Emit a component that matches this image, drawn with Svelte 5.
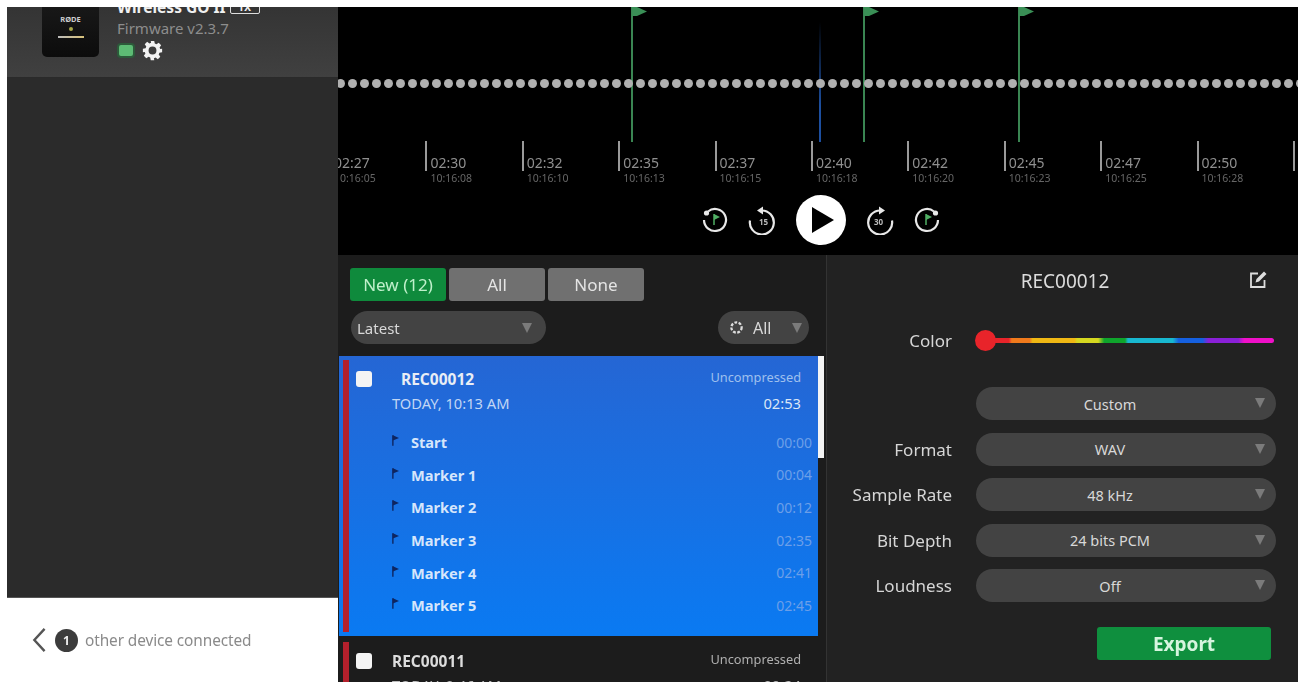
<script>
  const dots = Array.from({ length: 81 });
  const ticks = [
    ['02:27', '10:16:05'], ['02:30', '10:16:08'], ['02:32', '10:16:10'], ['02:35', '10:16:13'],
    ['02:37', '10:16:15'], ['02:40', '10:16:18'], ['02:42', '10:16:20'], ['02:45', '10:16:23'],
    ['02:47', '10:16:25'], ['02:50', '10:16:28'], ['', '']
  ];
  const flags = [293, 525, 680];
  const markers = [
    ['Start', '00:00'], ['Marker 1', '00:04'], ['Marker 2', '00:12'],
    ['Marker 3', '02:35'], ['Marker 4', '02:41'], ['Marker 5', '02:45']
  ];
  const selects = [
    ['', 'Custom'], ['Format', 'WAV'], ['Sample Rate', '48 kHz'], ['Bit Depth', '24 bits PCM'], ['Loudness', 'Off']
  ];
</script>

<div class="page">
  <aside class="side">
    <div class="device">
      <div class="thumb">
        <span class="brand">RØDE</span>
        <span class="led"></span>
        <span class="strip"></span>
      </div>
      <div class="info">
        <div class="name">Wireless GO II <span class="tx">TX</span></div>
        <div class="fw">Firmware v2.3.7</div>
        <div class="status">
          <span class="batt"></span>
          <svg class="gear" viewBox="0 0 24 24" width="21" height="21">
            <path fill="#f2f2f2" fill-rule="evenodd" d="M10 1h4l.6 3.1 1.9.8 2.6-1.8 2.8 2.8-1.8 2.6.8 1.9L23 10v4l-3.1.6-.8 1.9 1.8 2.6-2.8 2.8-2.6-1.8-1.9.8L14 23h-4l-.6-3.1-1.9-.8-2.6 1.8-2.8-2.8 1.8-2.6-.8-1.9L1 14v-4l3.1-.6.8-1.9-1.8-2.6 2.8-2.8 2.6 1.8 1.9-.8zM12 7.5a4.5 4.5 0 1 0 0 9 4.5 4.5 0 0 0 0-9z"/>
          </svg>
        </div>
      </div>
    </div>
    <div class="side-fill"></div>
    <div class="side-foot">
      <svg viewBox="0 0 16 28" width="16" height="26">
        <path d="M14 2 3 14l11 12" fill="none" stroke="#555" stroke-width="2.6"/>
      </svg>
      <span class="count">1</span>
      <span class="other">other device connected</span>
    </div>
  </aside>

  <main class="main">
    <section class="timeline">
      {#each flags as left}
        <div class="flag" style="left:{left}px">
          <svg viewBox="0 0 15 9" width="15" height="9"><path d="M0 0h5l10 4.5-10 4.5H0z" fill="#3a8f56"/></svg>
        </div>
      {/each}
      <div class="playhead"></div>
      <div class="dots">
        {#each dots as _}<span class="dot"></span>{/each}
      </div>
      <div class="ruler">
        {#each ticks as t}
          <div class="tick">
            <div class="tt">{t[0]}</div>
            <div class="ts">{t[1]}</div>
          </div>
        {/each}
      </div>
      <div class="controls">
        <svg viewBox="0 0 30 30" width="30" height="30">
          <path d="M8 6.5a11 11 0 1 1-4 8.5" fill="none" stroke="#e8e8e8" stroke-width="2.2"/>
          <circle cx="6.5" cy="8" r="2.6" fill="#e8e8e8"/>
          <path d="M14 9v11" stroke="#4fae63" stroke-width="1.5"/><path d="M14 9l6 3-6 3z" fill="#4fae63"/>
        </svg>
        <svg viewBox="0 0 30 30" width="30" height="30">
          <path d="M14 5.5a12 12 0 1 1-12 10" fill="none" stroke="#e8e8e8" stroke-width="2.2"/>
          <path d="M15 1.5v8l-6-4z" fill="#e8e8e8"/>
          <text x="15.5" y="20" class="skip">15</text>
        </svg>
        <div class="play">
          <svg viewBox="0 0 24 28" width="24" height="28"><path d="M1 1l22 13L1 27z" fill="#000"/></svg>
        </div>
        <svg viewBox="0 0 30 30" width="30" height="30">
          <path d="M16 5.5a12 12 0 1 0 12 10" fill="none" stroke="#e8e8e8" stroke-width="2.2"/>
          <path d="M15 1.5v8l6-4z" fill="#e8e8e8"/>
          <text x="14.5" y="20" class="skip">30</text>
        </svg>
        <svg viewBox="0 0 30 30" width="30" height="30">
          <path d="M22 6.5a11 11 0 1 0 4 8.5" fill="none" stroke="#e8e8e8" stroke-width="2.2"/>
          <circle cx="23.5" cy="8" r="2.6" fill="#e8e8e8"/>
          <path d="M14 9v11" stroke="#4fae63" stroke-width="1.5"/><path d="M14 9l6 3-6 3z" fill="#4fae63"/>
        </svg>
      </div>
    </section>

    <section class="lower">
      <div class="listpane">
        <div class="tabs">
          <button class="tab active">New (12)</button>
          <button class="tab">All</button>
          <button class="tab">None</button>
        </div>
        <div class="filters">
          <div class="pill latest"><span>Latest</span><i class="caret"></i></div>
          <div class="pill colour">
            <svg viewBox="0 0 16 16" width="15" height="15">
              <circle cx="8" cy="8" r="5.5" fill="none" stroke="#ddd" stroke-width="2.4" stroke-dasharray="3 1.6"/>
            </svg>
            <span>All</span><i class="caret"></i>
          </div>
        </div>
        <div class="listwrap">
          <div class="scrollthumb"></div>
          <article class="rec selected">
            <div class="bar"></div>
            <div class="rec-head">
              <span class="check"></span>
              <div class="rec-text">
                <div class="rowline">
                  <span class="rec-name offset">REC00012</span>
                  <span class="kind">Uncompressed</span>
                </div>
                <div class="rowline second">
                  <span class="date">TODAY, 10:13 AM</span>
                  <span class="dur">02:53</span>
                </div>
              </div>
            </div>
            <div class="markers">
              {#each markers as m}
                <div class="marker">
                  <svg viewBox="0 0 8 12" width="7" height="11"><path d="M1 0v12" stroke="#0e2560" stroke-width="1.6"/><path d="M1 0l7 3-7 3z" fill="#0e2560"/></svg>
                  <span class="mname">{m[0]}</span>
                  <span class="mtime">{m[1]}</span>
                </div>
              {/each}
            </div>
          </article>
          <article class="rec plain">
            <div class="bar"></div>
            <div class="rec-head">
              <span class="check"></span>
              <div class="rec-text">
                <div class="rowline">
                  <span class="rec-name">REC00011</span>
                  <span class="kind">Uncompressed</span>
                </div>
                <div class="rowline second">
                  <span class="date">TODAY, 9:46 AM</span>
                  <span class="dur">00:24</span>
                </div>
              </div>
            </div>
          </article>
        </div>
      </div>

      <div class="detail">
        <header class="dhead">
          <span class="dtitle">REC00012</span>
          <svg class="edit" viewBox="0 0 20 20" width="20" height="20">
            <path d="M10 3.5H3v13.5h13.5V10" fill="none" stroke="#ddd" stroke-width="1.8"/>
            <path d="M7.5 12.5l1-3.5L16 1.5 18.5 4 11 11.5z" fill="#ddd"/>
          </svg>
        </header>
        <div class="colorrow">
          <span class="lbl">Color</span>
          <div class="slider"><span class="knob"></span></div>
        </div>
        <div class="form">
          {#each selects as s}
            <div class="frow">
              <span class="lbl">{s[0]}</span>
              <div class="sel"><span>{s[1]}</span><i class="caret"></i></div>
            </div>
          {/each}
        </div>
        <div class="exportrow"><button class="export">Export</button></div>
      </div>
    </section>
  </main>
</div>

<style>
  :global(body) { margin: 0; background: #fff; }
  .page {
    display: flex;
    height: 682px;
    box-sizing: border-box;
    padding: 7px 5px 0 7px;
    overflow: hidden;
    font-family: "Noto Sans", "Open Sans", sans-serif;
    filter: blur(0.6px);
  }
  .side { width: 331px; flex: none; display: flex; flex-direction: column; }
  .device {
    height: 71px;
    flex: none;
    display: flex;
    gap: 18px;
    padding-left: 35px;
    overflow: hidden;
    background: linear-gradient(#343434, #404040);
    border-bottom: 1px solid #2a2a2a;
    box-sizing: border-box;
  }
  .thumb {
    width: 57px;
    height: 60px;
    margin-top: -10px;
    flex: none;
    border-radius: 5px;
    background: linear-gradient(#1a1a1a, #0c0c0c);
    display: flex;
    flex-direction: column;
    align-items: center;
    padding-top: 18px;
    box-sizing: border-box;
    color: #ccc;
  }
  .brand { font-size: 7.5px; font-weight: 700; line-height: 9px; }
  .led { width: 4px; height: 4px; border-radius: 50%; background: #a8a84a; margin-top: 3px; }
  .strip { width: 26px; height: 2px; background: linear-gradient(90deg, #bbb, #d8c27a); margin-top: 5px; }
  .info { margin-top: -10px; }
  .name { font-size: 15.5px; font-weight: 700; line-height: 20px; color: #f0f0f0; white-space: nowrap; }
  .tx {
    display: inline-block;
    border: 1.5px solid #ddd;
    border-radius: 2px;
    font-size: 10px;
    line-height: 11px;
    padding: 0 8px;
    margin-left: 0;
    vertical-align: 2px;
  }
  .fw { font-size: 15px; line-height: 19px; color: #8d8d8d; margin-top: 2px; }
  .status { display: flex; align-items: center; gap: 9px; margin-top: 2px; }
  .batt { width: 14px; height: 11px; background: #5dbb74; border-radius: 2px; box-shadow: 0 0 0 2px #2c5a3a; margin-left: 2px; }
  .gear { display: block; }
  .side-fill { flex: 1; background: #2b2b2b; border-bottom: 1px solid #555; }
  .side-foot {
    height: 84px;
    flex: none;
    display: flex;
    align-items: center;
    padding: 0 0 0 24px;
    box-sizing: border-box;
    color: #8a8a8a;
    font-size: 15.4px;
    background: #fff;
  }
  .count {
    width: 23px;
    height: 23px;
    border-radius: 50%;
    background: #3c3c3c;
    color: #eee;
    font-size: 12px;
    font-weight: 700;
    display: flex;
    align-items: center;
    justify-content: center;
    margin: 0 7px 0 8px;
  }
  .other { letter-spacing: -0.1px; }

  .main { flex: 1; min-width: 0; display: flex; flex-direction: column; }
  .timeline { height: 248px; flex: none; background: #000; position: relative; overflow: hidden; }
  .flag {
    position: absolute;
    top: 0;
    width: 2px;
    height: 135px;
    background: #3a8552;
  }
  .flag svg { display: block; margin-left: 1px; }
  .playhead {
    position: absolute;
    left: 481px;
    top: 15px;
    width: 2px;
    height: 120px;
    background: linear-gradient(#000, #1d4f9f 70%);
  }
  .dots { display: flex; gap: 3px; padding: 72px 0 0 0; margin-left: -2px; position: relative; }
  .dot { width: 9px; height: 9px; border-radius: 50%; background: #b0b0b0; flex: none; }
  .ruler { display: flex; margin: 53px 0 0 -9px; }
  .tick {
    width: 96.4px;
    flex: none;
    border-left: 2px solid #9a9a9a;
    height: 30px;
    padding: 12px 0 0 3px;
    box-sizing: border-box;
    color: #8f8f8f;
    white-space: nowrap;
  }
  .tt { font-size: 14px; line-height: 20px; }
  .ts { font-size: 10.5px; line-height: 11px; color: #666; }
  .controls {
    display: flex;
    align-items: center;
    justify-content: center;
    gap: 18px;
    padding-left: 5px;
    margin-top: 24px;
  }
  .controls svg { display: block; }
  .skip { font-size: 8px; font-weight: 700; fill: #bbb; text-anchor: middle; font-family: "Noto Sans", sans-serif; }
  .play {
    width: 50px;
    height: 50px;
    border-radius: 50%;
    background: #fff;
    display: flex;
    align-items: center;
    justify-content: center;
    padding-left: 4px;
    box-sizing: border-box;
  }
  .lower { flex: 1; min-height: 0; display: flex; }
  .listpane {
    width: 489px;
    flex: none;
    background: #1c1c1c;
    display: flex;
    flex-direction: column;
    border-right: 1px solid #333;
    box-sizing: border-box;
  }
  .tabs { display: flex; gap: 3px; padding: 13px 0 0 12px; }
  .tab {
    width: 96px;
    height: 33px;
    border: 0;
    border-radius: 3px;
    background: #707070;
    color: #e4e4e4;
    font: 17px "Noto Sans", sans-serif;
    padding: 0;
  }
  .tab.active { background: #0f8a3c; color: #bff0cb; }
  .filters { display: flex; justify-content: space-between; padding: 10px 17px 0 13px; }
  .pill {
    height: 33px;
    border-radius: 17px;
    background: #434343;
    display: flex;
    align-items: center;
    color: #d8d8d8;
    font-size: 15px;
    box-sizing: border-box;
  }
  .latest { width: 195px; padding: 0 14px 0 6px; justify-content: space-between; }
  .colour { width: 91px; padding: 0 7px 0 11px; gap: 9px; font-size: 16px; }
  .colour .caret { margin-left: auto; }
  .colour svg { display: block; }
  .caret {
    display: block;
    width: 0;
    height: 0;
    border-left: 5px solid transparent;
    border-right: 5px solid transparent;
    border-top: 10px solid #7b7b7b;
  }
  .listwrap { position: relative; margin-top: 12px; margin-left: 1px; flex: 1; min-height: 0; overflow: hidden; }
  .scrollthumb { position: absolute; right: 2px; top: 0; width: 6px; height: 102px; background: #f4f4f4; }
  .rec { width: 479px; position: relative; box-sizing: border-box; }
  .selected {
    height: 280px;
    background: linear-gradient(#2566d4, #0a7af2);
    margin-bottom: 6px;
  }
  .plain { height: 60px; }
  .bar { position: absolute; left: 4px; top: 4px; bottom: 4px; width: 6px; background: #b3202c; }
  .plain .bar { top: 0; bottom: 0; }
  .rec-head { display: flex; padding: 11px 17px 0 17px; }
  .plain .rec-head { padding-top: 7px; }
  .check { width: 16px; height: 16px; border-radius: 3px; background: #f4f4f4; flex: none; margin-top: 4px; }
  .rec-text { flex: 1; margin-left: 20px; }
  .rowline { display: flex; justify-content: space-between; align-items: center; height: 24px; }
  .rowline.second { height: 24px; }
  .rec-name { font-size: 15.5px; font-weight: 700; color: #e8edf5; }
  .offset { margin-left: 9px; }
  .plain .rec-name { color: #dcdcdc; }
  .kind { font-size: 12.8px; color: #9fc0ee; margin-top: -5px; }
  .plain .kind { color: #b0b0b0; }
  .date { font-size: 14.7px; color: #c2d6f4; }
  .dur { font-size: 14.7px; color: #dbe6f6; }
  .plain .date, .plain .dur { color: #bbb; }
  .markers { padding: 11px 6px 0 53px; }
  .marker { display: flex; align-items: center; height: 32.6px; }
  .marker svg { display: block; flex: none; margin-right: 12px; margin-top: -3px; }
  .mname { font-size: 14.6px; font-weight: 700; color: #d6e6fb; }
  .mtime { margin-left: auto; font-size: 14px; color: #6c9fe8; }

  .detail { flex: 1; min-width: 0; background: #222; padding: 0 22px 0 0; display: flex; flex-direction: column; }
  .dhead { height: 52px; display: flex; align-items: center; justify-content: center; position: relative; }
  .dtitle { font-size: 19px; color: #dcdcdc; margin-left: 27px; }
  .edit { position: absolute; right: 8px; top: 15px; }
  .colorrow { display: flex; align-items: center; height: 34px; margin-top: 16px; }
  .lbl { width: 125px; text-align: right; font-size: 17px; color: #d6d6d6; flex: none; white-space: nowrap; }
  .slider {
    margin-left: 24px;
    width: 298px;
    height: 5px;
    border-radius: 3px;
    position: relative;
    background: linear-gradient(90deg, #e8242a 0 11%, #f07a1c 12% 18%, #f0b814 19% 33%, #d6d820 34% 41%, #0fa52c 43% 50%, #18b8d0 51% 66%, #1560e0 68% 76%, #8a20d8 78% 88%, #f010c8 90% 100%);
  }
  .knob { position: absolute; left: -1px; top: -8px; width: 21px; height: 21px; border-radius: 50%; background: #e8242a; }
  .form { display: flex; flex-direction: column; gap: 12.5px; margin-top: 30px; }
  .frow { display: flex; align-items: center; }
  .sel {
    margin-left: 24px;
    width: 300px;
    height: 33px;
    border-radius: 17px;
    background: #434343;
    position: relative;
    display: flex;
    align-items: center;
    justify-content: center;
    padding-right: 32px;
    box-sizing: border-box;
    color: #d8d8d8;
    font-size: 14.5px;
  }
  .sel .caret { position: absolute; right: 11px; top: 11px; }
  .exportrow { display: flex; justify-content: flex-end; margin-top: 25px; padding-right: 5px; }
  .export {
    width: 174px;
    height: 33px;
    border: 0;
    border-radius: 3px;
    background: #0f8f3e;
    color: #d6f5df;
    font: 700 19px "Noto Sans", sans-serif;
    padding: 0;
  }
</style>
